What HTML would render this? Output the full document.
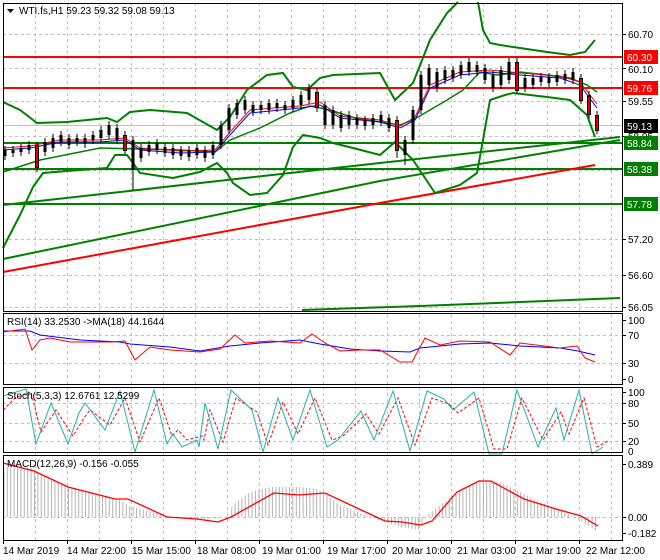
<!DOCTYPE html>
<html><head><meta charset="utf-8"><style>
html,body{margin:0;padding:0;background:#fff}
svg{display:block}
text{font-family:"Liberation Sans",sans-serif;font-size:10px;fill:#000}
</style></head><body>
<svg width="660" height="560" viewBox="0 0 660 560" xmlns="http://www.w3.org/2000/svg">
<defs>
<pattern id="hb" width="3.4" height="10" patternUnits="userSpaceOnUse"><rect x="0" y="0" width="1" height="10" fill="#b4b4b4"/></pattern>
</defs>
<rect width="660" height="560" fill="#fff"/>
<!-- vertical grid -->
<g stroke="#c0c0c0" stroke-dasharray="3,3" stroke-width="1">
<path d="M35.5 3V540M67.5 3V540M99.5 3V540M131.5 3V540M163.5 3V540M195.5 3V540M227.5 3V540M259.5 3V540M291.5 3V540M323.5 3V540M355.5 3V540M387.5 3V540M419.5 3V540M451.5 3V540M483.5 3V540M515.5 3V540M547.5 3V540M579.5 3V540M611.5 3V540"/>
<path d="M3 34.5H623M3 68.5H623M3 101.5H623M3 136.5H623M3 170.5H623M3 204.5H623M3 239.5H623M3 275.5H623M3 307.5H623"/>
<path d="M3 335.5H623M3 363.5H623M3 403.5H623M3 423.5H623M3 441.5H623M3 517.5H623"/>
</g>
<!-- current price line -->
<path d="M3 125.5H623" stroke="#c0c0c0"/>
<!-- horizontal levels -->
<g stroke-width="2" fill="none">
<path d="M3 57H623" stroke="#ff0000"/>
<path d="M3 88H623" stroke="#ff0000"/>
<path d="M3 143H623" stroke="#008000"/>
<path d="M3 169H623" stroke="#008000"/>
<path d="M3 204H623" stroke="#008000"/>
<!-- trend lines -->
<path d="M3 259L380 181L620 140" stroke="#008000"/>
<path d="M3 205L380 163L620 137" stroke="#008000"/>
<path d="M3 272L380 203L595 165" stroke="#ff0000"/>
<path d="M302 310L420 306L620 298" stroke="#008000"/>
<!-- bollinger -->
<path d="M3 102L20 110L37 123L67 122L107 118L117 122L130 112L150 110L187 113L217 130L230 117L247 90L267 75L283 73L293 87L307 90L320 78L333 75L380 73L395 100L413 83L430 40L447 13L458 2M478 2L483 30L490 43L500 45L520 48L547 52L570 55L585 52L595 40" stroke="#008000"/>
<path d="M3 248L20 215L33 187L43 173L67 171L107 168L115 155L127 155L133 163L140 173L173 178L200 172L217 163L227 173L233 183L250 195L267 193L283 175L293 147L303 135L320 138L333 143L353 148L380 155L395 142L413 160L435 193L460 185L477 173L483 140L490 100L505 95L513 93L547 97L570 100L587 115L595 137" stroke="#008000"/>
<path d="M3 172L40 160L100 148L180 150L215 152L230 140L260 128L290 113L310 106L330 110L355 118L380 122L400 125L413 120L430 110L447 100L463 90L480 72L497 75L520 72L547 75L570 78L587 85L597 92" stroke="#008000" stroke-width="1.5"/>
</g>
<!-- MAs -->
<path d="M3 150L30 148L60 142L100 142L125 140L140 150L180 153L215 152L230 135L250 113L300 108L320 105L340 118L380 122L400 128L415 120L430 88L460 75L490 72L520 75L560 78L580 85L597 108" stroke="#0000ff" fill="none"/>
<path d="M3 148L30 146L60 140L100 140L125 138L140 148L180 151L215 150L230 132L250 110L300 106L320 102L340 116L380 120L400 126L415 117L430 85L460 72L490 70L520 73L560 76L580 82L597 104" stroke="#ff0000" fill="none"/>
<!-- candles wicks -->
<path stroke="#000" stroke-width="1" fill="none" d="M5 146V160M13 146V157M21 144V156M29 141V154M37 142V172M45 138V156M53 134V152M61 131V146M69 134V149M77 134V146M85 134V148M93 131V144M101 126V142M109 121V139M117 124V144M125 131V154M133 136V190M141 144V162M149 141V156M157 139V154M165 143V157M173 144V159M181 146V160M189 146V161M197 144V159M205 146V162M213 141V159M221 121V149M229 104V134M237 99V119M245 96V114M253 101V116M261 101V114M269 99V114M277 99V112M285 101V114M293 96V112M301 91V109M309 84V104M317 88V112M325 101V129M333 106V129M341 111V132M349 111V129M357 114V129M365 116V130M373 114V129M381 111V126M389 114V132M397 116V158M405 136V165M413 106V144M421 71V114M429 64V89M437 68V92M445 66V84M453 66V82M461 61V79M469 58V76M477 61V76M485 64V84M493 71V92M501 66V89M509 58V84M517 58V94M525 74V92M533 74V89M541 73V86M549 73V87M557 71V86M565 70V84M573 68V84M581 74V104M589 91V119M597 111V134"/>
<!-- candle bodies -->
<path stroke="#000" stroke-width="3" fill="none" d="M5 150V156M13 150V153M21 148V152M29 145V150M45 142V152M53 138V148M61 135V142M69 138V145M77 138V142M85 138V144M93 135V140M101 130V138M109 125V135M117 128V140M133 140V170M141 148V158M149 145V152M157 143V150M165 147V153M173 148V155M181 150V156M189 150V157M197 148V155M205 150V158M213 145V155M221 125V145M229 108V130M237 103V115M245 100V110M253 105V112M261 105V110M269 103V110M277 103V108M285 105V110M293 100V108M301 95V105M309 88V100M325 105V125M333 110V125M341 115V128M349 115V125M357 118V125M365 120V126M373 118V125M381 115V122M389 118V128M405 140V155M413 110V140M421 75V110M429 68V85M437 72V88M445 70V80M453 70V78M461 65V75M469 62V72M477 65V72M485 68V80M493 75V88M501 70V85M509 62V80M525 78V88M533 78V85M541 77V82M549 77V83M557 75V82M565 74V80M573 72V80M589 95V115"/>
<g fill="#e00000" stroke="#000" stroke-width="1">
<rect x="35.5" y="145.5" width="3" height="22"/><rect x="123.5" y="135.5" width="3" height="15"/><rect x="315.5" y="92.5" width="3" height="15"/><rect x="395.5" y="120.5" width="3" height="30"/><rect x="515.5" y="62.5" width="3" height="28"/><rect x="579.5" y="78.5" width="3" height="22"/><rect x="595.5" y="115.5" width="3" height="15"/><rect x="587.5" y="96.5" width="3" height="18"/>
</g>
<!-- RSI -->
<polyline fill="none" stroke="#0000ff" points="3,331 30,331 40,335 80,340 120,342 130,344 170,347 200,351 230,346 260,343 300,340 320,344 350,349 380,351 410,352 420,348 460,344 490,343 520,346 560,348 578,351 595,355"/>
<polyline fill="none" stroke="#ff0000" points="3,332 25,329 32,350 40,340 50,338 70,342 110,342 125,341 135,360 150,347 170,350 200,352 220,349 235,335 245,343 270,341 300,343 312,334 325,343 340,351 360,350 380,350 400,362 412,362 425,338 440,345 460,341 490,342 510,355 520,343 560,348 577,346 585,358 595,362"/>
<!-- Stoch -->
<polyline fill="none" stroke="#ff0000" stroke-dasharray="3,2" points="3,410 15,398 31,392 41,432 56,410 73,436 84,418 90,410 110,425 125,398 140,442 159,398 172,436 178,430 187,440 202,436 204,440 210,410 223,442 236,398 257,412 268,445 283,402 298,434 315,398 332,440 343,436 366,414 379,434 398,398 415,445 432,398 449,404 458,413 479,398 494,449 507,449 522,398 543,440 561,412 569,434 584,398 597,447 608,441"/>
<polyline fill="none" stroke="#20b2aa" points="3,396 26,389 36,444 51,403 68,444 79,413 85,403 105,430 120,391 135,452 154,390 167,444 173,434 182,447 197,440 199,447 205,403 218,449 231,390 252,410 263,452 278,398 293,440 310,390 327,447 338,440 361,411 374,440 393,391 410,451 427,391 444,399 453,410 474,392 489,454 502,454 517,390 538,447 556,408 564,440 579,390 592,454 603,447"/>
<!-- MACD hist -->
<polygon fill="url(#hb)" points="4,517 4,467 30,468 35,471 60,484 80,490 120,500 130,506 160,514 170,517 200,520 230,517 232,505 250,492 270,487 300,487 318,489 340,505 370,517 400,527 420,530 425,517 440,505 460,490 480,480 500,482 520,492 540,502 560,510 575,517 598,532 598,517"/>
<polyline fill="none" stroke="#ff0000" stroke-width="1.3" points="3,463 34,471 68,487 115,499 128,499 167,517 197,519 218,522 231,517 274,493 299,495 325,493 359,509 385,521 402,522 421,525 432,521 457,492 479,481 491,481 524,499 556,509 581,516 598,526"/>
<!-- panel borders -->
<g fill="none" stroke="#000" stroke-width="1">
<rect x="3.5" y="3.5" width="619" height="308"/>
<rect x="3.5" y="313.5" width="619" height="71"/>
<rect x="3.5" y="387.5" width="619" height="65"/>
<rect x="3.5" y="455.5" width="619" height="85"/>
<path d="M623 34.5h3M623 68.5h3M623 101.5h3M623 136.5h3M623 239.5h3M623 275.5h3M623 307.5h3M623 320.5h3M623 335.5h3M623 363.5h3M623 379.5h3M623 392.5h3M623 403.5h3M623 423.5h3M623 441.5h3M623 464.5h3M623 517.5h3M623 533.5h3"/>
<path d="M3.5 540v4M67.5 540v4M131.5 540v4M195.5 540v4M259.5 540v4M323.5 540v4M387.5 540v4M451.5 540v4M515.5 540v4M579.5 540v4"/>
</g>
<!-- title -->
<path d="M7 9h7l-3.5 4z" fill="#000"/>
<text x="19" y="14">WTI.fs,H1  59.23 59.32 59.08 59.13</text>
<text x="7" y="325">RSI(14) 33.2530  -&gt;MA(18) 44.1644</text>
<text x="7" y="399">Stoch(5,3,3) 12.6761 12.5299</text>
<text x="7" y="467">MACD(12,26,9) -0.156 -0.055</text>
<!-- right axis -->
<text x="628" y="38">60.70</text>
<text x="628" y="73">60.10</text>
<text x="628" y="105">59.55</text>
<text x="628" y="140">58.95</text>
<text x="628" y="243">57.20</text>
<text x="628" y="279">56.60</text>
<text x="628" y="311">56.05</text>
<rect x="624" y="50" width="34" height="14" fill="#ff0000"/><text x="627" y="61" style="fill:#fff">60.30</text>
<rect x="624" y="81" width="34" height="14" fill="#ff0000"/><text x="627" y="92" style="fill:#fff">59.76</text>
<rect x="624" y="119" width="34" height="14" fill="#000"/><text x="627" y="130" style="fill:#fff">59.13</text>
<rect x="624" y="136" width="34" height="14" fill="#008000"/><text x="627" y="147" style="fill:#fff">58.84</text>
<rect x="624" y="162" width="34" height="14" fill="#008000"/><text x="627" y="173" style="fill:#fff">58.38</text>
<rect x="624" y="197" width="34" height="14" fill="#008000"/><text x="627" y="208" style="fill:#fff">57.78</text>
<text x="628" y="324">100</text>
<text x="628" y="339">70</text>
<text x="628" y="367">30</text>
<text x="628" y="383">0</text>
<text x="628" y="396">100</text>
<text x="628" y="407">80</text>
<text x="628" y="427">50</text>
<text x="628" y="445">20</text>
<text x="628" y="455">0</text>
<text x="628" y="468">0.389</text>
<text x="628" y="521">0.00</text>
<text x="628" y="537">-0.182</text>
<!-- bottom axis -->
<text x="3" y="554">14 Mar 2019</text>
<text x="67" y="554">14 Mar 22:00</text>
<text x="132" y="554">15 Mar 15:00</text>
<text x="197" y="554">18 Mar 08:00</text>
<text x="262" y="554">19 Mar 01:00</text>
<text x="327" y="554">19 Mar 17:00</text>
<text x="392" y="554">20 Mar 10:00</text>
<text x="457" y="554">21 Mar 03:00</text>
<text x="522" y="554">21 Mar 19:00</text>
<text x="586" y="554">22 Mar 12:00</text>
</svg>
</body></html>
